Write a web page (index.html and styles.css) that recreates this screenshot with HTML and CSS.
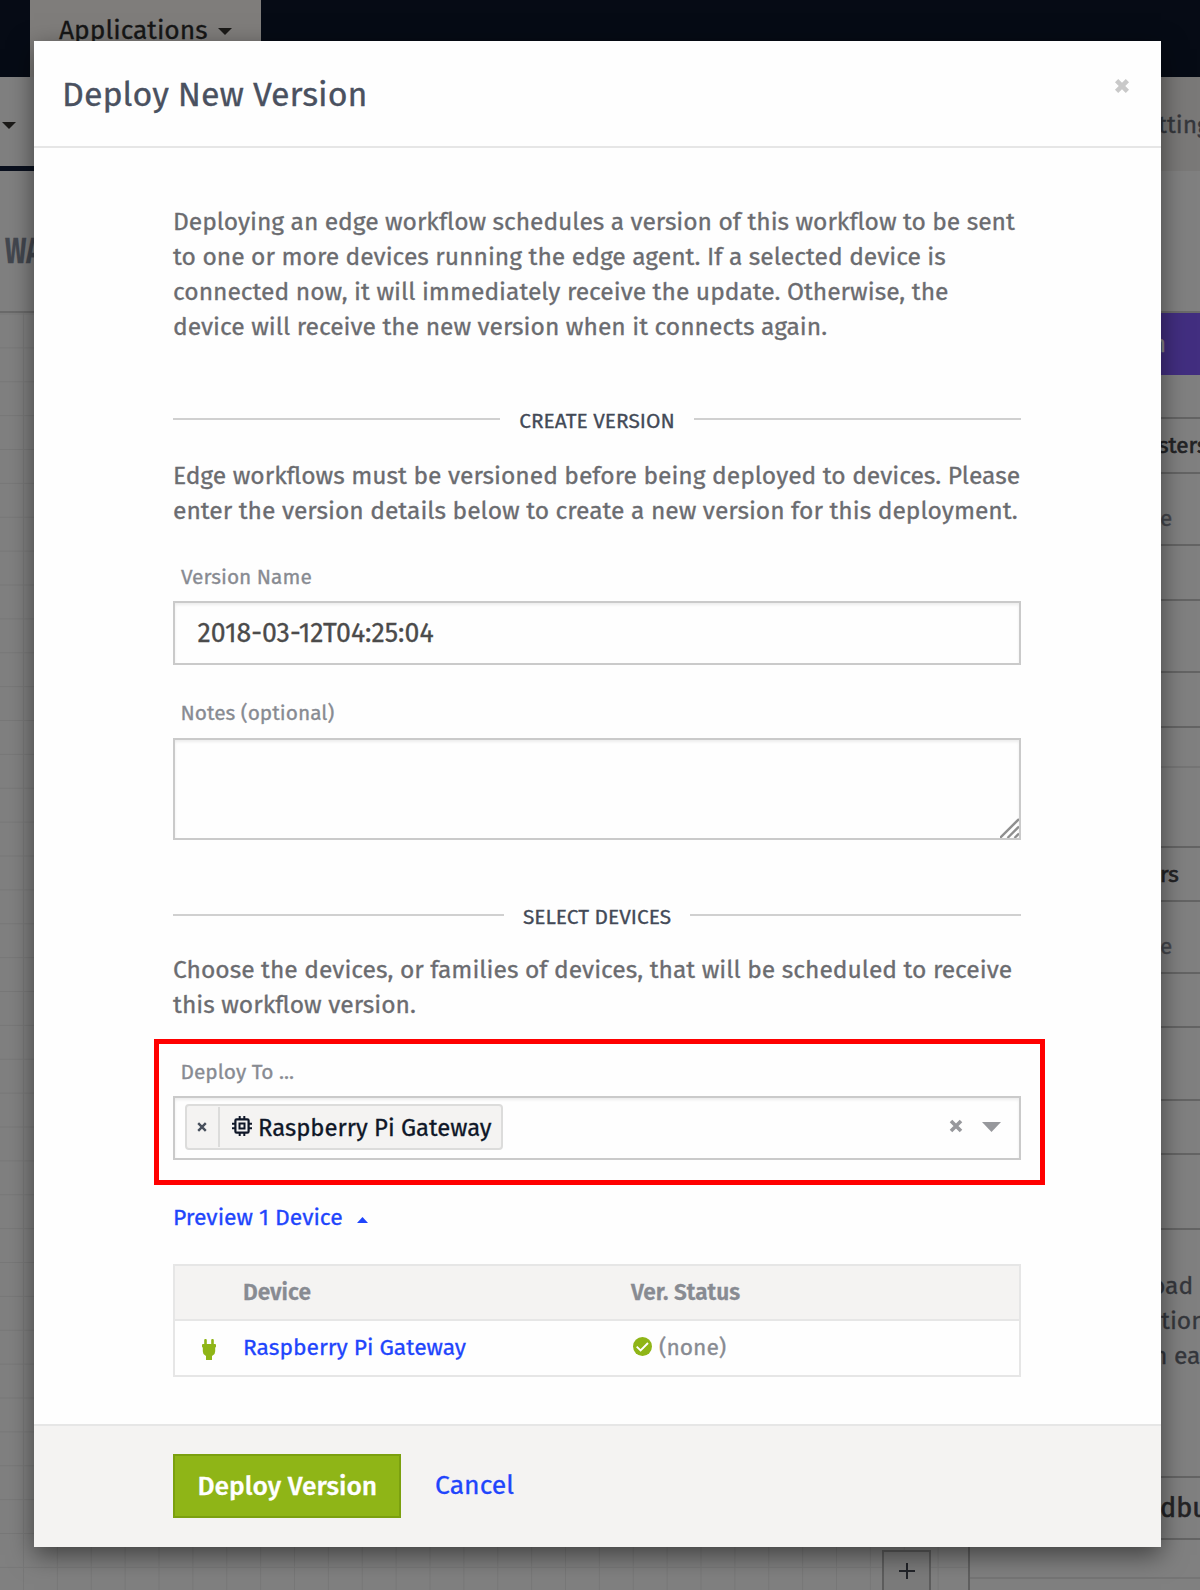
FILE: index.html
```html
<!DOCTYPE html>
<html lang="en">
<head>
<meta charset="utf-8">
<title>Deploy New Version</title>
<link rel="stylesheet" href="styles.css">
</head>
<body>
<div class="app">
  <nav class="nav">
    <div class="nav-tab">Applications <i class="caret"></i></div>
  </nav>
  <div class="subbar">
    <div class="subbar-left"><i class="caret"></i></div>
    <div class="subbar-right">tting</div>
  </div>
  <div class="flow-head"><span>WA</span></div>
  <div class="workspace">
    <div class="canvas"><div class="zoom-in"><svg width="16" height="16" viewBox="0 0 16 16"><path d="M8 0v16M0 8h16" stroke="#222429" stroke-width="2"/></svg></div></div>
    <aside class="panel">
      <div class="panel-tab">n</div>
      <div class="row h44"></div>
      <div class="row h55 strong">sters</div>
      <div class="row h72 soft">e</div>
      <div class="row h55"></div>
      <div class="row h72"></div>
      <div class="row h55"></div>
      <div class="row h40 faint"></div>
      <div class="row h80"></div>
      <div class="row h54 strong">rs</div>
      <div class="row h72 soft">e</div>
      <div class="row h54"></div>
      <div class="row h73"></div>
      <div class="row h54"></div>
      <div class="row h75"></div>
      <div class="row h248 help"><p class="p1">oad</p><p class="p2">tion</p><p class="p3">n ea</p></div>
      <div class="row h62 strong big">dbu</div>
      <div class="row h39 faint"></div>
    </aside>
  </div>
</div>

<section class="modal">
  <header class="modal-head">
    <h1>Deploy New Version</h1>
    <svg class="close" width="16" height="16" viewBox="0 0 16 16"><path d="M2.6 2.6 13.4 13.4M13.4 2.6 2.6 13.4" stroke="#c9c9c9" stroke-width="4.6"/></svg>
  </header>
  <div class="modal-body">
    <p class="copy"><span class="tight">Deploying an edge workflow schedules a version of this workflow to be sent</span><span>to one or more devices running the edge agent. If a selected device is</span><span>connected now, it will immediately receive the update. Otherwise, the</span><span>device will receive the new version when it connects again.</span></p>
    <h2 class="rule">CREATE VERSION</h2>
    <p class="copy second"><span>Edge workflows must be versioned before being deployed to devices. Please</span><span>enter the version details below to create a new version for this deployment.</span></p>
    <label class="label name-label">Version Name</label>
    <div class="field">2018-03-12T04:25:04</div>
    <label class="label notes-label">Notes (optional)</label>
    <div class="field notes"><svg width="19" height="20" viewBox="0 0 19 20"><path d="M0 20 19 1M7.500 20 19 8.500M14.500 20 19 15.500" stroke="#8f8f8f" stroke-width="2.300" fill="none"/></svg></div>
    <h2 class="rule select-rule">SELECT DEVICES</h2>
    <p class="copy third"><span>Choose the devices, or families of devices, that will be scheduled to receive</span><span>this workflow version.</span></p>
    <div class="highlight">
      <label class="label deploy-label">Deploy To ...</label>
      <div class="field picker">
        <div class="chip">
          <div class="chip-x"><svg width="10" height="10" viewBox="0 0 10 10"><path d="M1.2 1.2 8.8 8.8M8.8 1.2 1.2 8.8" stroke="#474f5c" stroke-width="2.4"/></svg></div>
          <svg class="chip-icon" width="20" height="20" viewBox="0 0 20 20" fill="none" stroke="#0f1728"><rect x="3.4" y="3.4" width="13.2" height="13.2" rx="1.2" stroke-width="2.2"/><rect x="7.5" y="7.5" width="5" height="5" stroke-width="2"/><path d="M7.7 0v3M12.3 0v3M7.7 17v3M12.3 17v3M0 7.7h3M0 12.3h3M17 7.7h3M17 12.3h3" stroke-width="2"/></svg>
          <span>Raspberry Pi Gateway</span>
        </div>
        <svg class="clear" width="14" height="14" viewBox="0 0 14 14"><path d="M2 2 12 12M12 2 2 12" stroke="#97989c" stroke-width="3.6"/></svg>
        <svg class="arrow" width="19" height="10" viewBox="0 0 19 10"><path d="M0 0h19L9.5 10z" fill="#97989c"/></svg>
      </div>
    </div>
    <div class="preview"><span>Preview 1 Device</span><svg width="11" height="6" viewBox="0 0 11 6"><path d="M0 6 5.5 0 11 6z" fill="#1f45fc"/></svg></div>
    <div class="table">
      <div class="tr th"><div class="c1"></div><div class="c2">Device</div><div class="c3">Ver. Status</div></div>
      <div class="tr">
        <div class="c1"><svg width="14" height="21" viewBox="0 0 14 21"><path d="M2.200 5V1.200a1 1 0 0 1 2.600 0V5h4.400V1.200a1 1 0 0 1 2.600 0V5H13q1 0 1 1v1.600q0 .8-.8.9v3.700q0 2.600-2.200 4l-1 .8v4H4v-4l-1-.8q-2.200-1.400-2.200-4V8.500Q0 8.400 0 7.600V6q0-1 1-1z" fill="#8fb517"/></svg></div>
        <div class="c2 link">Raspberry Pi Gateway</div>
        <div class="c3 none"><svg width="19" height="19" viewBox="0 0 19 19"><circle cx="9.500" cy="9.500" r="9.500" fill="#8fb517"/><path d="M3.700 9.600 7.600 13.400 15 6" fill="none" stroke="#fff" stroke-width="1.900"/></svg>(none)</div>
      </div>
    </div>
  </div>
  <footer class="modal-foot">
    <div class="btn">Deploy Version</div>
    <div class="cancel">Cancel</div>
  </footer>
</section>
</body>
</html>
```

FILE: styles.css
```css
* { box-sizing: border-box; margin: 0; padding: 0; }
html, body { height: 1590px; overflow: hidden; }
body { position: relative; width: 1200px; background: #808080; font-family: "Fira Sans", "Noto Sans", sans-serif; -webkit-text-stroke-width: .3px; }
svg { display: block; flex: none; }

/* dimmed page behind the dialog */
.app { display: flex; flex-direction: column; height: 1590px; }
.nav { height: 77px; background: #060b15; padding-left: 30px; }
.nav-tab { width: 231px; height: 77px; padding-left: 29px; background: #7f7d7b; color: #161616; font-size: 26.400px; line-height: 61px; display: flex; }
.caret { display: block; width: 0; height: 0; border: 7.500px solid transparent; border-top-color: #1b1a18; border-bottom: 0; }
.nav-tab .caret { margin: 28px 0 0 10px; }
.subbar { display: flex; height: 94px; background: #7a7978; overflow: hidden; }
.subbar-left { flex: none; width: 600px; background: #808080; border-bottom: 5px solid #0a101e; padding: 45px 0 0 2px; }
.subbar-right { flex: none; width: 600px; padding: 29px 0 0 558px; font-size: 24.600px; line-height: 38px; color: #35373c; white-space: nowrap; overflow: hidden; }
.flow-head { height: 142px; border-bottom: 2px solid #6a6a6a; padding: 59px 0 0 5px; overflow: hidden; }
.flow-head span { display: block; font-size: 36px; font-weight: 700; line-height: 42px; color: #43474f; transform: scaleX(.7); transform-origin: 0 0; }
.workspace { display: flex; flex: 1; min-height: 0; }
.canvas { flex: none; width: 970px; border-right: 2px solid #606060; display: flex; align-items: flex-end;
  background-image: linear-gradient(#787878 1px, transparent 1px), linear-gradient(90deg, #787878 1px, transparent 1px);
  background-size: 33.880px 33.880px; background-position: 23px .500px; }
.zoom-in { width: 49px; height: 40px; margin-left: 882px; border: 2px solid #5d5d5d; border-bottom: 0; background: #7b7b7b; display: flex; justify-content: center; padding-top: 11px; }
.panel { flex: none; width: 230px; display: flex; flex-direction: column; background: #808080; overflow: hidden; }
.panel-tab { flex: none; height: 62px; background: #422e80; color: #8a8a8a; font-size: 24px; line-height: 62px; padding-left: 182px; }
.row { flex: none; border-bottom: 2px solid #646464; padding-left: 190px; font-size: 22.500px; white-space: nowrap; overflow: hidden; }
.faint { border-color: #757575; }
.strong { color: #232325; -webkit-text-stroke-width: .6px; line-height: 54px; }
.soft { color: #45474d; line-height: 90px; }
.h55.strong { padding-left: 188px; }
.big { font-size: 27px; line-height: 61px; }
.help { color: #35373c; font-size: 24.600px; }
.help p { line-height: 35px; }
.help .p1 { padding-top: 39px; margin-left: -9px; }
.help .p2 { margin-left: 1px; }
.help .p3 { margin-left: -7px; }
.h39 { height: 39px; } .h40 { height: 40px; } .h44 { height: 44px; } .h54 { height: 54px; } .h55 { height: 55px; }
.h62 { height: 62px; } .h72 { height: 72px; } .h73 { height: 73px; } .h75 { height: 75px; } .h80 { height: 80px; } .h248 { height: 248px; }

/* dialog */
.modal { position: absolute; left: 34px; top: 41px; width: 1126.500px; height: 1506px; background: #fefefe; display: flex; flex-direction: column; box-shadow: 0 8px 24px rgba(0,0,0,.5); }
.modal-head { height: 107px; border-bottom: 2px solid #e6e6e6; display: flex; justify-content: space-between; padding: 31px 30.500px 0 28px; }
.modal-head h1 { font-size: 34px; font-weight: 400; line-height: 46px; color: #4a5160; }
.close { margin-top: 6px; }
.modal-body { flex: 1; padding: 57px 139.500px 0 139px; }
.copy { font-size: 24.600px; line-height: 35px; color: #6b6c70; white-space: nowrap; }
.copy span { display: block; }
.copy .tight { letter-spacing: -.040px; }
.rule { display: flex; align-items: center; gap: 19px; margin-top: 61px; height: 29px; padding-top: 2px; font-size: 20.900px; font-weight: 400; line-height: 27px; color: #434a57; }
.rule::before, .rule::after { content: ""; flex: 1; height: 2px; margin-bottom: 5px; background: #d0d0d0; }
.select-rule { margin-top: 62px; }
.second { margin-top: 24px; }
.third { margin-top: 22px; }
.label { display: block; padding-left: 7.500px; font-size: 20.900px; line-height: 30px; color: #888b92; }
.name-label { margin-top: 33px; padding-left: 8px; }
.notes-label { margin-top: 33px; padding-bottom: 1px; }
.field { margin-top: 9px; height: 64px; border: 2px solid #cacaca; box-shadow: inset 0 2px 3px rgba(0,0,0,.07); padding-left: 22.500px; font-size: 26.700px; line-height: 60px; color: #4b4b4b; }
.notes { height: 102px; padding: 0; display: flex; align-items: flex-end; justify-content: flex-end; }
.highlight { margin: 16px -24px 0 -19px; width: 891px; height: 146px; border: 5px solid #f00; padding: 13px 19px 0 14px; }
.picker { display: flex; align-items: center; padding: 0 18px 0 10px; }
.chip { display: flex; align-items: center; width: 318px; height: 46px; border: 2px solid #dcdcdb; border-radius: 4px; background: #f4f3f2; color: #0f1728; font-size: 23.900px; line-height: 42px; white-space: nowrap; margin-bottom: 3px; }
.chip span { padding-top: 2px; }
.chip-x { width: 33px; height: 40px; border-right: 2px solid #dcdcdb; display: flex; align-items: center; justify-content: center; padding-right: 1px; }
.chip-icon { margin: 0 6px 1px 12px; }
.clear { margin: 0 19px 4px auto; }
.arrow { margin-bottom: 2px; }
.preview { display: flex; margin-top: 17px; height: 30px; font-size: 22.900px; line-height: 31px; color: #1f45fc; }
.preview svg { margin: 15px 0 0 14px; }
.table { margin-top: 32px; height: 113px; border: 2px solid #e6e6e6; font-size: 22.800px; }
.tr { display: flex; align-items: center; height: 54px; padding-bottom: 1px; color: #888b92; }
.th { height: 55px; background: #f4f3f2; border-bottom: 2px solid #e6e6e6; font-weight: 600; font-size: 22.700px; padding-bottom: 0; }
.c1 { width: 68px; padding: 3px 0 0 27px; }
.c2 { width: 388px; }
.link { color: #1f45fc; }
.none { display: flex; gap: 7px; padding-left: 2px; }
.none svg { margin-top: 3px; }
.modal-foot { height: 123px; border-top: 2px solid #e6e6e6; background: #f4f3f2; display: flex; padding: 28px 0 0 139px; font-size: 26.600px; line-height: 60px; }
.btn { width: 228px; height: 64px; border: 2px solid #7ba00f; background: #8fb517; color: #fff; font-size: 26.400px; font-weight: 500; padding-left: 22.500px; white-space: nowrap; }
.cancel { padding: 1px 0 0 34px; color: #1f45fc; }
```
